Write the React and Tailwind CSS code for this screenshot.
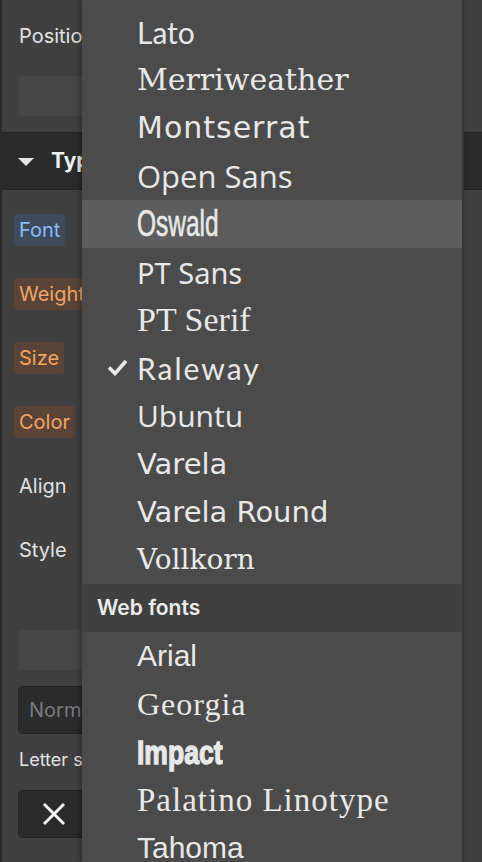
import React from "react";

const fontsA = [
  { name: "Lato", cls: "font-['Lato',sans-serif] text-[30px]" },
  { name: "Merriweather", cls: "font-['DejaVu_Serif',serif] text-[30px]" },
  { name: "Montserrat", cls: "font-['DejaVu_Sans',sans-serif] text-[30px] tracking-[1px]" },
  { name: "Open Sans", cls: "font-['Open_Sans',sans-serif] text-[31px]" },
  { name: "Oswald", cls: "font-['Liberation_Sans',sans-serif] text-[36px] inline-block origin-left scale-x-[0.68] [-webkit-text-stroke:0.6px_#e8e8e8]", hl: true },
  { name: "PT Sans", cls: "font-['Noto_Sans',sans-serif] text-[29px]" },
  { name: "PT Serif", cls: "font-['Liberation_Serif',serif] text-[34px]" },
  { name: "Raleway", cls: "font-['Lato',sans-serif] text-[30px] tracking-[2px]", check: true },
  { name: "Ubuntu", cls: "font-['Open_Sans',sans-serif] text-[30px]" },
  { name: "Varela", cls: "font-['DejaVu_Sans',sans-serif] text-[29px]" },
  { name: "Varela Round", cls: "font-['DejaVu_Sans',sans-serif] text-[29px]" },
  { name: "Vollkorn", cls: "font-['DejaVu_Serif',serif] text-[28px]" },
];

const fontsB = [
  { name: "Arial", cls: "font-['Liberation_Sans',sans-serif] text-[30px]" },
  { name: "Georgia", cls: "font-['Liberation_Serif',serif] text-[32px] tracking-[1px]" },
  { name: "Impact", cls: "font-['Liberation_Sans',sans-serif] font-bold text-[34px] inline-block origin-left scale-x-[0.78] [-webkit-text-stroke:1.4px_#e8e8e8]" },
  { name: "Palatino Linotype", cls: "font-['Liberation_Serif',serif] text-[33px] tracking-[1px]" },
  { name: "Tahoma", cls: "font-['Liberation_Sans',sans-serif] text-[30px]" },
];

function Item({ f }) {
  return (
    <div className={`relative h-[48px] flex items-center pl-[55px] text-[#e8e8e8] ${f.hl ? "bg-[#5d5d5d]" : ""}`}>
      {f.check && (
        <svg className="absolute left-[25px] top-[14px]" width="21" height="18" viewBox="0 0 21 18">
          <polyline points="2,9.5 8,15.5 19,3" fill="none" stroke="#e8e8e8" strokeWidth="3.6" strokeLinecap="butt" strokeLinejoin="miter" />
        </svg>
      )}
      <span className={`${f.cls} leading-none whitespace-nowrap`}>{f.name}</span>
    </div>
  );
}

function Label({ text, kind }) {
  const styles =
    kind === "blue"
      ? "bg-[#3c4a5c] text-[#8dbbf2] px-[5px] -ml-[5px] rounded-[3px]"
      : kind === "orange"
      ? "bg-[#5a4336] text-[#f1a565] px-[5px] -ml-[5px] rounded-[3px]"
      : "text-[#e2e2e2]";
  return (
    <div className="h-[32px] flex items-center mb-[32px]">
      <span className={`h-[32px] flex items-center text-[20px] ${styles}`}>{text}</span>
    </div>
  );
}

export default function App() {
  return (
    <div className="relative w-[482px] h-[862px] overflow-hidden bg-[#404040] border-l-2 border-[#2a2a2a] font-['Inter',sans-serif]">
      {/* Panel */}
      <div className="flex flex-col">
        <div className="h-[72px] flex items-center pl-[17px] text-[20px] text-[#e2e2e2]">Position</div>
        <div className="ml-[16px] mt-[4px] w-[420px] h-[40px] rounded-[4px] bg-[#474747]" />
        <div className="mt-[16px] h-[58px] bg-[#2b2b2b] border-y border-[#232323] flex items-center pl-[16px]">
          <svg width="16" height="8" viewBox="0 0 16 8" className="mt-[1px]">
            <polygon points="0,0 16,0 8,8" fill="#e6e6e6" />
          </svg>
          <span className="ml-[17px] text-[21px] font-bold text-[#f0f0f0]">Typography</span>
        </div>
        <div className="mt-[24px] pl-[17px]">
          <Label text="Font" kind="blue" />
          <Label text="Weight" kind="orange" />
          <Label text="Size" kind="orange" />
          <Label text="Color" kind="orange" />
          <Label text="Align" />
          <Label text="Style" />
        </div>
        <div className="ml-[16px] mt-[32px] w-[420px] h-[40px] rounded-[4px] bg-[#474747]" />
        <div className="ml-[16px] mt-[16px] w-[200px] h-[48px] rounded-[4px] bg-[#2b2b2b] border border-[#222] flex items-center pl-[10px] text-[20px] text-[#7a7a7a]">
          Normal
        </div>
        <div className="h-[26px] mt-[12px] flex items-center pl-[17px] text-[18px] text-[#e2e2e2]">Letter spacing</div>
        <div className="ml-[16px] mt-[18px] w-[72px] h-[48px] rounded-[4px] bg-[#2b2b2b] border border-[#222] flex items-center justify-center">
          <svg width="24" height="24" viewBox="0 0 24 24">
            <path d="M2 2 L22 22 M22 2 L2 22" stroke="#f2f2f2" strokeWidth="3" />
          </svg>
        </div>
      </div>

      {/* Dropdown */}
      <div className="absolute left-[80px] top-0 w-[382px] h-[862px] bg-[#4b4b4b] border-r-2 border-[#373737] shadow-[-3px_0_6px_rgba(0,0,0,0.25)] pt-[8px]">
        {fontsA.map((f) => (
          <Item key={f.name} f={f} />
        ))}
        <div className="h-[48px] bg-[#404040] flex items-center pl-[15px] text-[21px] font-semibold text-[#ececec]">
          Web fonts
        </div>
        {fontsB.map((f) => (
          <Item key={f.name} f={f} />
        ))}
      </div>
    </div>
  );
}
